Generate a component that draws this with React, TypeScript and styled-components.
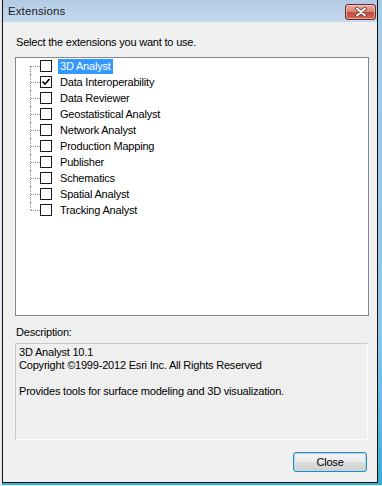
import React, { useState } from 'react';
import styled, { createGlobalStyle } from 'styled-components';

const GlobalStyle = createGlobalStyle`
  html, body {
    margin: 0;
    padding: 0;
    background: #e4e8ed;
  }
  body {
    font-family: "Liberation Sans", Arial, sans-serif;
    font-size: 11px;
    color: #000;
  }
`;

const Page = styled.div`
  width: 382px;
  height: 486px;
  overflow: hidden;
  display: flex;
  background: #e4e8ed;
`;

const Frame = styled.div`
  margin-left: 2px;
  width: 380px;
  height: 485px;
  padding: 0 4px 2px 0;
  box-sizing: border-box;
  background: linear-gradient(to bottom, #a9cbe8 0%, #8fc6e6 70%, #2fb0d6 100%);
`;

const Window = styled.div`
  width: 376px;
  height: 483px;
  box-sizing: border-box;
  border-left: 1px solid #111;
  border-right: 1px solid #111;
  border-bottom: 1px solid #111;
  background: #f0f0f0;
  display: flex;
  flex-direction: column;
`;

const TitleBar = styled.div`
  height: 22px;
  flex-shrink: 0;
  display: flex;
  align-items: flex-start;
  justify-content: space-between;
  padding: 0 1px 0 5px;
  background: linear-gradient(to bottom, #b3cae4 0%, #bcd2ea 50%, #c4d9ef 100%);
`;

const Title = styled.div`
  font-size: 11.5px;
  line-height: 22px;
  color: #1b1b1b;
  letter-spacing: 0.1px;
`;

const CloseX = styled.button`
  margin-top: 4px;
  width: 31px;
  height: 16px;
  padding: 0;
  border: 1px solid #6a2b2b;
  border-radius: 3px;
  background: linear-gradient(to bottom, #e9b0a6 0%, #d98577 45%, #c24a3b 55%, #cf6a55 100%);
  box-shadow: inset 0 0 0 1px rgba(255, 220, 210, 0.5);
  display: flex;
  align-items: center;
  justify-content: center;
`;

const Client = styled.div`
  flex: 1;
  display: flex;
  flex-direction: column;
  padding: 14px 0 0 12px;
`;

const Caption = styled.div<{ $gap?: number }>`
  padding-left: 1px;
  line-height: 13px;
  letter-spacing: -0.2px;
  margin-top: ${p => p.$gap ?? 0}px;
`;

const TreeBox = styled.div`
  margin-top: 8px;
  width: 354px;
  height: 259px;
  box-sizing: border-box;
  border: 1px solid #828790;
  background: #fff;
`;

const Row = styled.div`
  height: 16px;
  display: flex;
  align-items: center;
  padding-left: 14px;
`;

const Branch = styled.span<{ $first?: boolean; $last?: boolean }>`
  position: relative;
  width: 10px;
  height: 16px;
  flex-shrink: 0;

  &::before {
    content: '';
    position: absolute;
    left: 0;
    top: ${p => (p.$first ? '8px' : '0')};
    bottom: ${p => (p.$last ? '8px' : '0')};
    border-left: 1px dotted #8e8e8e;
  }

  &::after {
    content: '';
    position: absolute;
    left: 1px;
    right: 0;
    top: 8px;
    border-top: 1px dotted #8e8e8e;
  }
`;

const Check = styled.span`
  width: 12px;
  height: 12px;
  box-sizing: border-box;
  border: 1px solid #1a1a1a;
  background: #fff;
  flex-shrink: 0;
  display: flex;
  align-items: center;
  justify-content: center;
`;

const ItemLabel = styled.span<{ $selected?: boolean }>`
  margin-left: 6px;
  padding: 0 2px;
  line-height: 15px;
  letter-spacing: -0.2px;
  background: ${p => (p.$selected ? '#3399ff' : 'transparent')};
  color: ${p => (p.$selected ? '#fff' : '#000')};
`;

const DescBox = styled.div`
  margin-top: 4px;
  width: 353px;
  height: 97px;
  box-sizing: border-box;
  padding: 2px 3px;
  border: 1px solid;
  border-color: #c9c9c9 #fcfcfc #fcfcfc #c9c9c9;
  background: #efefef;
  line-height: 13px;
  letter-spacing: -0.2px;
`;

const DescLine = styled.div`
  min-height: 13px;
  white-space: nowrap;
`;

const Footer = styled.div`
  margin-top: 12px;
  width: 352px;
  display: flex;
  justify-content: flex-end;
`;

const Button = styled.button`
  width: 74px;
  height: 20px;
  padding: 0;
  font-family: "Liberation Sans", Arial, sans-serif;
  font-size: 11px;
  letter-spacing: -0.2px;
  color: #000;
  border: 1px solid #3c7fb1;
  border-radius: 3px;
  background: linear-gradient(to bottom, #f2f2f2 0%, #ebebeb 50%, #dddddd 51%, #cfcfcf 100%);
  box-shadow: inset 0 0 0 1px #9fe3f7;
`;

const extensions = [
  '3D Analyst',
  'Data Interoperability',
  'Data Reviewer',
  'Geostatistical Analyst',
  'Network Analyst',
  'Production Mapping',
  'Publisher',
  'Schematics',
  'Spatial Analyst',
  'Tracking Analyst',
];

const App: React.FC = () => {
  const [checked] = useState<string[]>(['Data Interoperability']);
  const selected = '3D Analyst';

  return (
    <Page>
      <GlobalStyle />
      <Frame>
        <Window>
          <TitleBar>
            <Title>Extensions</Title>
            <CloseX aria-label="Close">
              <svg width="14" height="10" viewBox="0 0 14 10">
                <path d="M3 1.5 L11 8.5 M11 1.5 L3 8.5" stroke="#5b3434" strokeWidth="3.6" strokeLinecap="round" />
                <path d="M3 1.5 L11 8.5 M11 1.5 L3 8.5" stroke="#fff" strokeWidth="2" strokeLinecap="round" />
              </svg>
            </CloseX>
          </TitleBar>

          <Client>
            <Caption>Select the extensions you want to use.</Caption>
            <TreeBox>
              {extensions.map((name, i) => (
                <Row key={name}>
                  <Branch $first={i === 0} $last={i === extensions.length - 1} />
                  <Check>
                    {checked.includes(name) && (
                      <svg width="10" height="10" viewBox="0 0 10 10">
                        <path d="M1.5 4.5 L4 7 L8.5 2" stroke="#000" strokeWidth="1.6" fill="none" />
                      </svg>
                    )}
                  </Check>
                  <ItemLabel $selected={name === selected}>{name}</ItemLabel>
                </Row>
              ))}
            </TreeBox>

            <Caption $gap={10}>Description:</Caption>
            <DescBox>
              <DescLine>3D Analyst 10.1</DescLine>
              <DescLine>Copyright ©1999-2012 Esri Inc. All Rights Reserved</DescLine>
              <DescLine />
              <DescLine>Provides tools for surface modeling and 3D visualization.</DescLine>
            </DescBox>

            <Footer>
              <Button>Close</Button>
            </Footer>
          </Client>
        </Window>
      </Frame>
    </Page>
  );
};

export default App;
